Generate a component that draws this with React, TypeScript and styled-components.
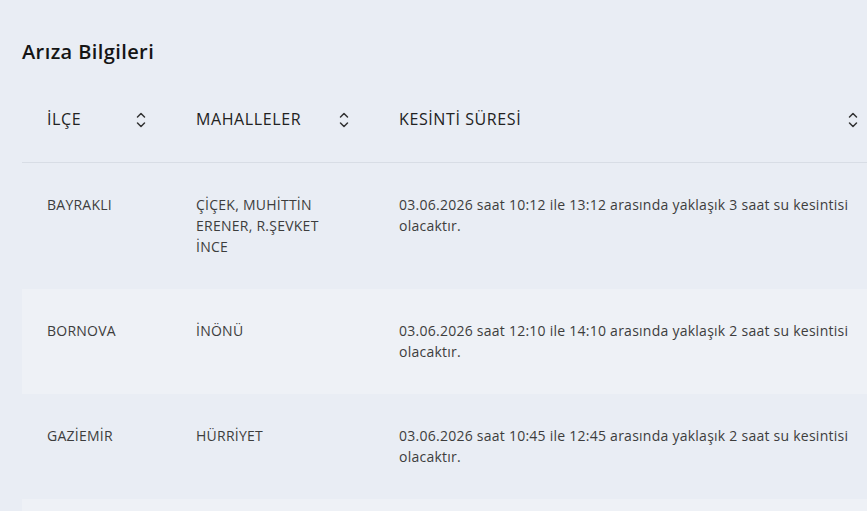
import React from "react";
import styled, { createGlobalStyle } from "styled-components";

const Global = createGlobalStyle`
  html, body { margin: 0; padding: 0; background: #e9edf4; overflow: hidden; }
  body { font-family: "Open Sans", "Noto Sans", sans-serif; color: #3a3a3a; }
`;

const Page = styled.div`
  padding: 38px 0 0 22px;
  width: 900px;
`;

const Title = styled.h2`
  margin: 0;
  font-size: 20px;
  font-weight: 600;
  letter-spacing: 0.4px;
  color: #151515;
  line-height: 28px;
`;

const Table = styled.table`
  margin-top: 11px;
  width: 861px;
  border-collapse: collapse;
  table-layout: fixed;
`;

const Col = styled.col<{ $w: number }>`
  width: ${(p) => p.$w}px;
`;

const Th = styled.th`
  box-sizing: border-box;
  padding: 32px 25px 32px 25px;
  text-align: left;
  font-size: 16px;
  font-weight: 500;
  letter-spacing: 0.6px;
  color: #222;
  line-height: 21px;
  border-bottom: 1px solid #d8dde5;
`;

const HeadInner = styled.div`
  display: flex;
  align-items: center;
  justify-content: space-between;
`;

const Row = styled.tr<{ $striped: boolean }>`
  background: ${(p) => (p.$striped ? "#eef1f6" : "transparent")};
`;

const Td = styled.td`
  box-sizing: border-box;
  padding: 31px 25px 32px;
  vertical-align: top;
  font-size: 14px;
  letter-spacing: 0.25px;
  line-height: 21px;
  color: #3d3d3d;
`;

const SortIcon = () => (
  <svg width="10" height="18" viewBox="0 0 10 18" fill="none" stroke="#333" strokeWidth="1.5" strokeLinecap="round" strokeLinejoin="round">
    <polyline points="1.5,6 5,2.5 8.5,6" />
    <polyline points="1.5,12 5,15.5 8.5,12" />
  </svg>
);

const rows = [
  { ilce: "BAYRAKLI", mah: "ÇİÇEK, MUHİTTİN ERENER, R.ŞEVKET İNCE", sure: "03.06.2026 saat 10:12 ile 13:12 arasında yaklaşık 3 saat su kesintisi olacaktır." },
  { ilce: "BORNOVA", mah: "İNÖNÜ", sure: "03.06.2026 saat 12:10 ile 14:10 arasında yaklaşık 2 saat su kesintisi olacaktır." },
  { ilce: "GAZİEMİR", mah: "HÜRRİYET", sure: "03.06.2026 saat 10:45 ile 12:45 arasında yaklaşık 2 saat su kesintisi olacaktır." },
  { ilce: "KARŞIYAKA", mah: "BAHARİYE", sure: "03.06.2026 saat 11:00 ile 13:00 arasında yaklaşık 2 saat su kesintisi olacaktır." },
];

export default function App() {
  return (
    <>
      <Global />
      <Page>
        <Title>Arıza Bilgileri</Title>
        <Table>
          <colgroup>
            <Col $w={149} />
            <Col $w={203} />
            <Col $w={509} />
          </colgroup>
          <thead>
            <tr>
              <Th><HeadInner>İLÇE<SortIcon /></HeadInner></Th>
              <Th><HeadInner>MAHALLELER<SortIcon /></HeadInner></Th>
              <Th><HeadInner>KESİNTİ SÜRESİ<SortIcon /></HeadInner></Th>
            </tr>
          </thead>
          <tbody>
            {rows.map((r, i) => (
              <Row key={i} $striped={i % 2 === 1}>
                <Td>{r.ilce}</Td>
                <Td>{r.mah}</Td>
                <Td>{r.sure}</Td>
              </Row>
            ))}
          </tbody>
        </Table>
      </Page>
    </>
  );
}
